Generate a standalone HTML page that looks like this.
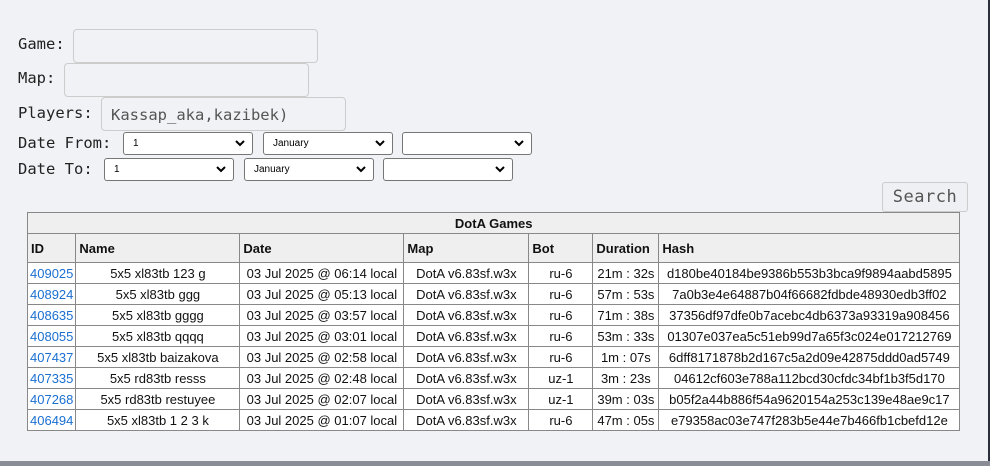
<!DOCTYPE html>
<html><head><style>
body{margin:0;width:990px;height:466px;background:#f1f2f6;position:relative;overflow:hidden;font-family:"DejaVu Sans Mono","Liberation Mono",monospace;}
.r{position:absolute;right:0;top:0;width:2px;height:466px;background:#2b2e3b}
.b{position:absolute;left:0;bottom:0;width:990px;height:5px;background:#8a8d96}
.l{position:absolute;font-size:15.5px;color:#222;}
.in{position:absolute;box-sizing:border-box;border:1px solid #ccc;border-radius:4px;background:#f1f2f6;height:34px;width:245px;font-size:15.5px;color:#555;padding:8px 0 0 9px}
.s{position:absolute;box-sizing:border-box;border:1px solid #767676;border-radius:3px;background:#fff;height:23px;width:130px;font-family:"Liberation Sans",Arial,sans-serif;font-size:10px;color:#000;padding:5px 0 0 9px}
.s svg{position:absolute;right:7px;top:7px}
.btn{position:absolute;left:882px;top:182px;width:86px;height:30px;box-sizing:border-box;border:1px solid #ccc;border-radius:3px;background:#eef0f3;font-size:17px;color:#555;text-align:center;line-height:29px;letter-spacing:0.5px}
table{position:absolute;left:27px;top:212px;border-collapse:collapse;font-family:"Liberation Sans",Arial,sans-serif;font-size:13px;color:#111;background:#fff}
td,th{border:1px solid #888;padding:0 3px;height:20px;white-space:nowrap;text-align:center}
th{background:#efefef;font-weight:bold;text-align:left;height:28px}
th.t{text-align:center;height:20px}
td a{color:#1a6fd1;text-decoration:none}
td.id{text-align:left;padding:0 2px}
</style></head><body>
<div class="r"></div><div class="b"></div>
<div class="l" style="left:18px;top:35px">Game:</div>
<div class="l" style="left:18px;top:69px">Map:</div>
<div class="l" style="left:18px;top:104px">Players:</div>
<div class="l" style="left:18px;top:134px">Date From:</div>
<div class="l" style="left:18px;top:160px">Date To:</div>
<div class="in" style="left:73px;top:29px"></div>
<div class="in" style="left:64px;top:63px"></div>
<div class="in" style="left:101px;top:97px">Kassap_aka,kazibek)</div>
<div class="s" style="left:123px;top:132px">1<svg width="10" height="7"><path d="M1 1l4 4 4-4" stroke="#000" stroke-width="2" fill="none"/></svg></div>
<div class="s" style="left:263px;top:132px">January<svg width="10" height="7"><path d="M1 1l4 4 4-4" stroke="#000" stroke-width="2" fill="none"/></svg></div>
<div class="s" style="left:402px;top:132px"><svg width="10" height="7"><path d="M1 1l4 4 4-4" stroke="#000" stroke-width="2" fill="none"/></svg></div>
<div class="s" style="left:104px;top:158px">1<svg width="10" height="7"><path d="M1 1l4 4 4-4" stroke="#000" stroke-width="2" fill="none"/></svg></div>
<div class="s" style="left:244px;top:158px">January<svg width="10" height="7"><path d="M1 1l4 4 4-4" stroke="#000" stroke-width="2" fill="none"/></svg></div>
<div class="s" style="left:383px;top:158px"><svg width="10" height="7"><path d="M1 1l4 4 4-4" stroke="#000" stroke-width="2" fill="none"/></svg></div>
<div class="btn">Search</div>
<table>
<tr><th class="t" colspan="7">DotA Games</th></tr>
<tr><th style="width:40px">ID</th><th style="width:157px">Name</th><th style="width:157px">Date</th><th style="width:118px">Map</th><th style="width:57px">Bot</th><th style="width:59px">Duration</th><th style="width:294px">Hash</th></tr>
<tr><td class="id"><a>409025</a></td><td>5x5 xl83tb 123 g</td><td>03 Jul 2025 @ 06:14 local</td><td>DotA v6.83sf.w3x</td><td>ru-6</td><td>21m : 32s</td><td>d180be40184be9386b553b3bca9f9894aabd5895</td></tr>
<tr><td class="id"><a>408924</a></td><td>5x5 xl83tb ggg</td><td>03 Jul 2025 @ 05:13 local</td><td>DotA v6.83sf.w3x</td><td>ru-6</td><td>57m : 53s</td><td>7a0b3e4e64887b04f66682fdbde48930edb3ff02</td></tr>
<tr><td class="id"><a>408635</a></td><td>5x5 xl83tb gggg</td><td>03 Jul 2025 @ 03:57 local</td><td>DotA v6.83sf.w3x</td><td>ru-6</td><td>71m : 38s</td><td>37356df97dfe0b7acebc4db6373a93319a908456</td></tr>
<tr><td class="id"><a>408055</a></td><td>5x5 xl83tb qqqq</td><td>03 Jul 2025 @ 03:01 local</td><td>DotA v6.83sf.w3x</td><td>ru-6</td><td>53m : 33s</td><td>01307e037ea5c51eb99d7a65f3c024e017212769</td></tr>
<tr><td class="id"><a>407437</a></td><td>5x5 xl83tb baizakova</td><td>03 Jul 2025 @ 02:58 local</td><td>DotA v6.83sf.w3x</td><td>ru-6</td><td>1m : 07s</td><td>6dff8171878b2d167c5a2d09e42875ddd0ad5749</td></tr>
<tr><td class="id"><a>407335</a></td><td>5x5 rd83tb resss</td><td>03 Jul 2025 @ 02:48 local</td><td>DotA v6.83sf.w3x</td><td>uz-1</td><td>3m : 23s</td><td>04612cf603e788a112bcd30cfdc34bf1b3f5d170</td></tr>
<tr><td class="id"><a>407268</a></td><td>5x5 rd83tb restuyee</td><td>03 Jul 2025 @ 02:07 local</td><td>DotA v6.83sf.w3x</td><td>uz-1</td><td>39m : 03s</td><td>b05f2a44b886f54a9620154a253c139e48ae9c17</td></tr>
<tr><td class="id"><a>406494</a></td><td>5x5 xl83tb 1 2 3 k</td><td>03 Jul 2025 @ 01:07 local</td><td>DotA v6.83sf.w3x</td><td>ru-6</td><td>47m : 05s</td><td>e79358ac03e747f283b5e44e7b466fb1cbefd12e</td></tr>
</table>
</body></html>
